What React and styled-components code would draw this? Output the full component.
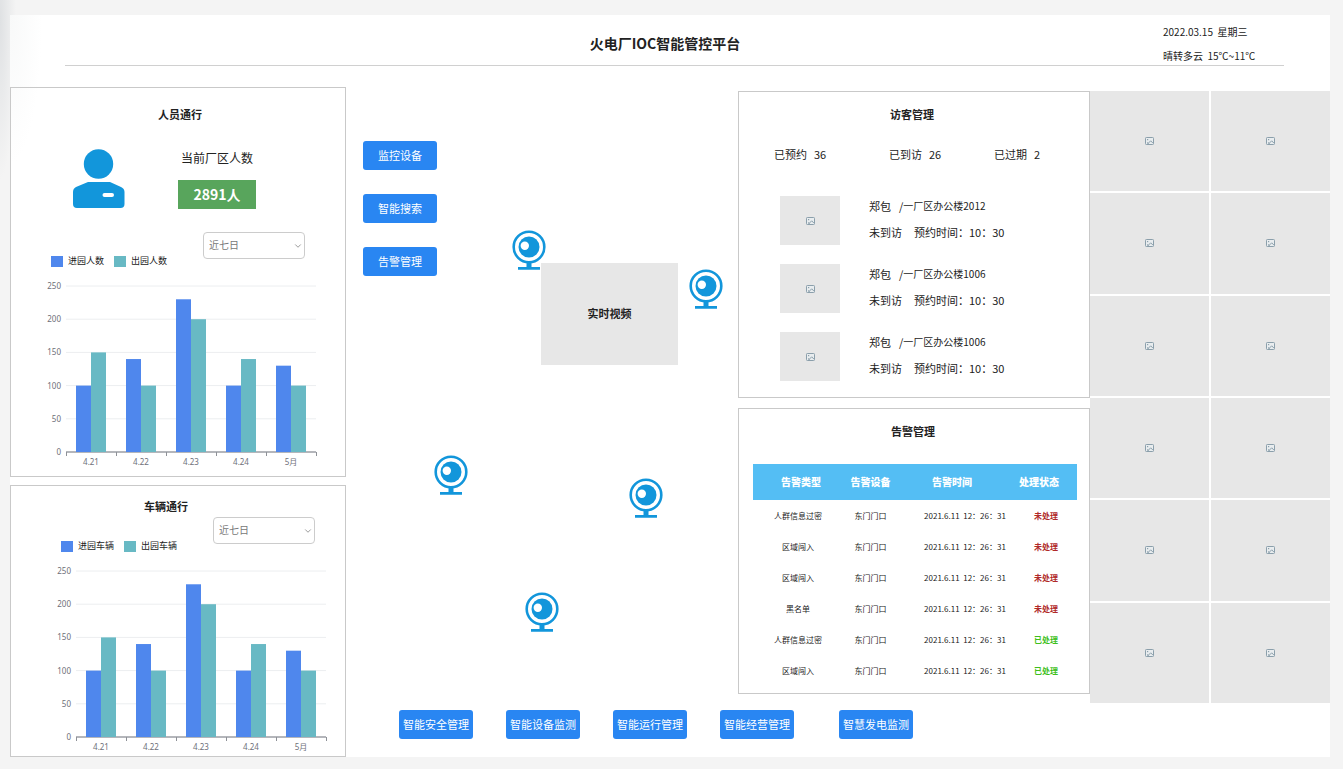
import React from "react";
import styled, { createGlobalStyle, ThemeProvider } from "styled-components";
import { ChevronDown } from "lucide-react";

const theme = {
  colors: {
    page: "#f4f4f4",
    board: "#ffffff",
    border: "#c9c9c9",
    placeholder: "#e7e7e7",
    text: "#222222",
    primary: "#2986f2",
    icon: "#1296db",
    success: "#58a55c",
    tableHeader: "#54bef4",
    seriesIn: "#4f87ed",
    seriesOut: "#68b9c4",
    pending: "#b02a2a",
    handled: "#3fbf1c",
  },
};

const chartData = [
  { label: "4.21", in: 100, out: 150 },
  { label: "4.22", in: 140, out: 100 },
  { label: "4.23", in: 230, out: 200 },
  { label: "4.24", in: 100, out: 140 },
  { label: "5月", in: 130, out: 100 },
];

const sideActions = ["监控设备", "智能搜索", "告警管理"];

const bottomGroups = [
  ["智能安全管理", "智能设备监测", "智能运行管理", "智能经营管理"],
  ["智慧发电监测"],
];

const cameras = [
  { id: 1, x: 166, y: 139 },
  { id: 2, x: 343, y: 178 },
  { id: 3, x: 88, y: 364 },
  { id: 4, x: 283, y: 387 },
  { id: 5, x: 179, y: 501 },
];

const visitorStats = [
  { label: "已预约", value: 36 },
  { label: "已到访", value: 26 },
  { label: "已过期", value: 2 },
];

const visitors = [
  { id: 1, name: "郑包", place: "一厂区办公楼2012" },
  { id: 2, name: "郑包", place: "一厂区办公楼1006" },
  { id: 3, name: "郑包", place: "一厂区办公楼1006" },
];

const alarms = [
  { id: 1, type: "人群信息过密", handled: false },
  { id: 2, type: "区域闯入", handled: false },
  { id: 3, type: "区域闯入", handled: false },
  { id: 4, type: "黑名单", handled: false },
  { id: 5, type: "人群信息过密", handled: true },
  { id: 6, type: "区域闯入", handled: true },
];

const UserIcon = () => (
  <svg width="52" height="60" viewBox="0 0 52 60" fill={theme.colors.icon}>
    <circle cx="25.500" cy="15" r="14.700" />
    <path
      fillRule="evenodd"
      d="M15 33h22l11 5q3.500 1.500 3.500 5v12q0 4-4 4H4q-4 0-4-4V43q0-3.500 3-5zM31.500 44a2 2 0 0 0 0 4h7.500a2 2 0 0 0 0-4z"
    />
  </svg>
);

const CameraIcon = () => (
  <svg width="34" height="40" viewBox="0 0 34 40" fill={theme.colors.icon}>
    <circle
      cx="17"
      cy="17"
      r="15.300"
      fill="#fff"
      stroke={theme.colors.icon}
      strokeWidth="2.600"
    />
    <circle cx="17" cy="17" r="10.500" />
    <circle cx="12.800" cy="15.700" r="4.200" fill="#fff" />
    <path d="M14.500 33h5v4H28v2.700H6V37h8.500z" />
  </svg>
);

const PictureIcon = () => (
  <svg width="9" height="8" viewBox="0 0 9 8" fill="none" stroke="#8b9fab">
    <rect x="0.500" y="0.500" width="8" height="7" rx="0.800" fill="#e9edef" />
    <rect x="2" y="2" width="1.200" height="1.200" fill="#8b9fab" stroke="none" />
    <path d="M2.500 7l3.200-3.200L8 6.200M2 5.500l1.500 1" />
  </svg>
);

const BarChart = ({ title, data }) => {
  const left = 25;
  const base = 175;
  const step = 50;
  const right = left + step * data.length;
  const toHeight = (value) => (value * 166) / 250;

  return (
    <Chart viewBox="0 0 280 192" role="img" aria-label={title}>
      {[0, 50, 100, 150, 200, 250].map((tick) => (
        <g key={tick}>
          <line
            x1={left}
            x2={right}
            y1={base - toHeight(tick)}
            y2={base - toHeight(tick)}
            stroke={tick ? "#eceef0" : "#b4b6bb"}
            strokeWidth={tick ? 1 : 2}
          />
          <text x="20" y={base - toHeight(tick) + 3} textAnchor="end">
            {tick}
          </text>
        </g>
      ))}
      {data.map((item, i) => (
        <g key={item.label}>
          <rect
            x={left + step * i + 10}
            y={base - toHeight(item.in)}
            width="15"
            height={toHeight(item.in)}
            fill={theme.colors.seriesIn}
          />
          <rect
            x={left + step * i + 25}
            y={base - toHeight(item.out)}
            width="15"
            height={toHeight(item.out)}
            fill={theme.colors.seriesOut}
          />
          <text x={left + step * i + 25} y="188" textAnchor="middle">
            {item.label}
          </text>
        </g>
      ))}
      {[0, 1, 2, 3, 4, 5].map((i) => (
        <path
          key={i}
          d={`M${left + step * i + 0.5} ${base}v4`}
          stroke="#8e9197"
        />
      ))}
    </Chart>
  );
};

const TrafficChart = ({ title, inLabel, outLabel, shifted }) => (
  <ChartBlock $shifted={shifted}>
    <ChartToolbar>
      <Legend>
        <LegendItem $color={theme.colors.seriesIn}>{inLabel}</LegendItem>
        <LegendItem $color={theme.colors.seriesOut}>{outLabel}</LegendItem>
      </Legend>
      <SelectBox>
        <Select aria-label={`${title}时间范围`} defaultValue="7">
          <option value="7">近七日</option>
          <option value="30">近三十日</option>
        </Select>
        <ChevronDown size={10} strokeWidth={2} />
      </SelectBox>
    </ChartToolbar>
    <BarChart title={title} data={chartData} />
  </ChartBlock>
);

const App = () => {
  return (
    <ThemeProvider theme={theme}>
      <GlobalStyle />
      <Board>
        <Header>
          <Title>火电厂IOC智能管控平台</Title>
          <HeaderInfo>
            <span>2022.03.15&nbsp; 星期三</span>
            <span>晴转多云&nbsp; 15℃~11℃</span>
          </HeaderInfo>
        </Header>

        <Content>
          <Sidebar>
            <PeoplePanel>
              <PanelTitle>人员通行</PanelTitle>
              <Summary>
                <UserIcon />
                <SummaryText>
                  <SummaryLabel>当前厂区人数</SummaryLabel>
                  <SummaryValue>2891人</SummaryValue>
                </SummaryText>
              </Summary>
              <TrafficChart
                title="人员通行"
                inLabel="进园人数"
                outLabel="出园人数"
              />
            </PeoplePanel>

            <VehiclePanel>
              <PanelTitle>车辆通行</PanelTitle>
              <TrafficChart
                title="车辆通行"
                inLabel="进园车辆"
                outLabel="出园车辆"
                shifted
              />
            </VehiclePanel>
          </Sidebar>

          <Main>
            <MainRow>
              <MapArea>
                <SideActions>
                  {sideActions.map((name) => (
                    <Button key={name}>{name}</Button>
                  ))}
                </SideActions>
                {cameras.map((camera) => (
                  <CameraPin
                    key={camera.id}
                    $x={camera.x}
                    $y={camera.y}
                    aria-label={`摄像头${camera.id}`}
                  >
                    <CameraIcon />
                  </CameraPin>
                ))}
                <VideoWindow>实时视频</VideoWindow>
              </MapArea>

              <InfoColumn>
                <VisitorPanel>
                  <PanelTitle>访客管理</PanelTitle>
                  <VisitorStats>
                    {visitorStats.map((stat) => (
                      <VisitorStat key={stat.label}>
                        <span>{stat.label}</span>
                        <span>{stat.value}</span>
                      </VisitorStat>
                    ))}
                  </VisitorStats>
                  <VisitorList>
                    {visitors.map((visitor) => (
                      <Visitor key={visitor.id}>
                        <Thumb>
                          <PictureIcon />
                        </Thumb>
                        <div>
                          <VisitorLine>
                            <VisitorName>{visitor.name}</VisitorName>
                            <span>/</span>
                            <Place>{visitor.place}</Place>
                          </VisitorLine>
                          <VisitorLine>
                            <VisitorStatus>未到访</VisitorStatus>
                            <span>预约时间：10：30</span>
                          </VisitorLine>
                        </div>
                      </Visitor>
                    ))}
                  </VisitorList>
                </VisitorPanel>

                <AlarmPanel>
                  <PanelTitle>告警管理</PanelTitle>
                  <AlarmTable>
                    <colgroup>
                      <col width="90" />
                      <col width="60" />
                      <col width="112" />
                      <col width="62" />
                    </colgroup>
                    <thead>
                      <tr>
                        <th>告警类型</th>
                        <th>告警设备</th>
                        <th>告警时间</th>
                        <th>处理状态</th>
                      </tr>
                    </thead>
                    <tbody>
                      {alarms.map((alarm) => (
                        <tr key={alarm.id}>
                          <td>{alarm.type}</td>
                          <td>东门门口</td>
                          <td>2021.6.11&nbsp; 12：26：31</td>
                          <Status $handled={alarm.handled}>
                            {alarm.handled ? "已处理" : "未处理"}
                          </Status>
                        </tr>
                      ))}
                    </tbody>
                  </AlarmTable>
                </AlarmPanel>
              </InfoColumn>

              <PhotoWall>
                {Array.from({ length: 12 }, (_, i) => (
                  <Photo key={i}>
                    <PictureIcon />
                  </Photo>
                ))}
              </PhotoWall>
            </MainRow>

            <BottomNav>
              {bottomGroups.map((group) => (
                <NavGroup key={group[0]}>
                  {group.map((name) => (
                    <Button key={name}>{name}</Button>
                  ))}
                </NavGroup>
              ))}
            </BottomNav>
          </Main>
        </Content>
      </Board>
    </ThemeProvider>
  );
};

const GlobalStyle = createGlobalStyle`
  * {
    box-sizing: border-box;
  }

  body {
    margin: 0;
    padding: 15px 13px 12px 10px;
    color: ${theme.colors.text};
    font-family: "Noto Sans CJK SC", "Noto Sans", sans-serif;
    font-size: 11px;
    line-height: 16px;
    background: radial-gradient(ellipse 16px 160px at 0 20px, #dfe1e3, ${theme.colors.page}) no-repeat;
    background-color: ${theme.colors.page};
  }
`;

const Board = styled.div`
  background: radial-gradient(
      ellipse 32px 150px at 0 0,
      #f8f9f9,
      ${({ theme }) => theme.colors.board}
    )
    no-repeat;
  background-color: ${({ theme }) => theme.colors.board};
`;

const Header = styled.header`
  display: flex;
  align-items: flex-start;
  height: 51px;
  margin: 0 46px 21px 55px;
  padding-left: 102px;
  border-bottom: 1px solid #d0d0d0;
`;

const Title = styled.h1`
  flex: 1;
  margin: 0;
  padding-top: 16px;
  font-size: 14px;
  line-height: 24px;
  text-align: center;
`;

const HeaderInfo = styled.div`
  display: flex;
  flex-direction: column;
  width: 121px;
  padding-top: 5px;
  font-size: 10px;
  line-height: 24px;
`;

const Content = styled.div`
  display: flex;
`;

const Sidebar = styled.aside`
  display: flex;
  flex-direction: column;
  gap: 8px;
  width: 336px;
`;

const Panel = styled.section`
  border: 1px solid ${({ theme }) => theme.colors.border};
`;

const PanelTitle = styled.h2`
  margin: 0;
  font-size: 11px;
  line-height: 16px;
  text-align: center;
`;

const PeoplePanel = styled(Panel)`
  padding: 18px 0 7px;

  ${PanelTitle} {
    padding-left: 4px;
  }
`;

const VehiclePanel = styled(Panel)`
  flex: 1;
  padding-top: 12px;

  ${PanelTitle} {
    padding-right: 24px;
  }
`;

const Summary = styled.div`
  display: flex;
  gap: 53px;
  padding: 27px 0 0 62px;
`;

const SummaryText = styled.div`
  display: flex;
  flex-direction: column;
  align-items: center;
  gap: 14px;
`;

const SummaryLabel = styled.div`
  font-size: 12px;
  line-height: 17px;
`;

const SummaryValue = styled.div`
  width: 78px;
  color: #fff;
  font-size: 14px;
  font-weight: bold;
  line-height: 29px;
  text-align: center;
  background: ${({ theme }) => theme.colors.success};
`;

const ChartBlock = styled.div`
  padding: ${({ $shifted }) => ($shifted ? "3px 14px 0 40px" : "23px 24px 0 30px")};
`;

const ChartToolbar = styled.div`
  display: flex;
  justify-content: space-between;
  height: 35px;
  margin-bottom: 10px;
  padding: 0 16px 0 10px;
`;

const Legend = styled.div`
  display: flex;
  align-items: flex-end;
  gap: 10px;
`;

const LegendItem = styled.div`
  display: flex;
  align-items: center;
  gap: 5px;
  font-size: 9px;
  line-height: 12px;

  &::before {
    content: "";
    width: 12px;
    height: 11px;
    background: ${({ $color }) => $color};
  }
`;

const SelectBox = styled.div`
  display: grid;
  align-items: center;
  width: 102px;
  height: 27px;

  > * {
    grid-area: 1 / 1;
  }

  svg {
    justify-self: end;
    margin-right: 2px;
    color: #888;
    pointer-events: none;
  }
`;

const Select = styled.select`
  appearance: none;
  width: 100%;
  height: 100%;
  padding: 0 5px 2px;
  border: 1px solid #cccccc;
  border-radius: 4px;
  background: none;
  color: #777;
  font: inherit;
  font-size: 10px;
`;

const Chart = styled.svg`
  display: block;
  width: 100%;

  text {
    fill: #6e7079;
    font-family: "Noto Sans", "Noto Sans CJK SC", sans-serif;
    font-size: 8px;
  }
`;

const Main = styled.main`
  flex: 1;
  padding-top: 4px;
`;

const MainRow = styled.div`
  display: flex;
  min-height: 612px;
`;

const MapArea = styled.div`
  position: relative;
  flex: 1;
  padding: 50px 0 0 17px;
`;

const SideActions = styled.div`
  display: flex;
  flex-direction: column;
  align-items: flex-start;
  gap: 24px;
`;

const Button = styled.button`
  width: 74px;
  height: 29px;
  padding: 0 0 2px;
  border: 0;
  border-radius: 3px;
  background: ${({ theme }) => theme.colors.primary};
  color: #fff;
  font: inherit;
  white-space: nowrap;
  cursor: pointer;
`;

const CameraPin = styled.button`
  position: absolute;
  left: ${({ $x }) => $x}px;
  top: ${({ $y }) => $y}px;
  padding: 0;
  border: 0;
  background: none;
  cursor: pointer;

  svg {
    display: block;
  }
`;

const VideoWindow = styled.div`
  position: absolute;
  left: 195px;
  top: 172px;
  width: 137px;
  height: 102px;
  background: ${({ theme }) => theme.colors.placeholder};
  font-weight: bold;
  line-height: 100px;
  text-align: center;
`;

const InfoColumn = styled.div`
  display: flex;
  flex-direction: column;
  gap: 10px;
  width: 352px;
  padding-bottom: 9px;

  ${PanelTitle} {
    padding-right: 4px;
  }
`;

const VisitorPanel = styled(Panel)`
  padding: 14px 0 16px;
`;

const VisitorStats = styled.div`
  display: grid;
  grid-template-columns: 115px 105px 1fr;
  padding: 24px 0 0 35px;
`;

const VisitorStat = styled.div`
  display: flex;
  gap: 7px;
`;

const VisitorList = styled.ul`
  display: flex;
  flex-direction: column;
  gap: 16px;
  margin: 0;
  padding: 31px 0 0 41px;
  list-style: none;
`;

const Visitor = styled.li`
  display: flex;
  align-items: flex-end;
  gap: 29px;
`;

const Thumb = styled.div`
  display: flex;
  align-items: center;
  justify-content: center;
  width: 60px;
  height: 49px;
  background: ${({ theme }) => theme.colors.placeholder};
`;

const VisitorLine = styled.div`
  display: flex;
  line-height: 26px;
`;

const VisitorName = styled.span`
  width: 30px;
`;

const VisitorStatus = styled.span`
  width: 45px;
`;

const Place = styled.span`
  font-size: 10px;
`;

const AlarmPanel = styled(Panel)`
  flex: 1;
  padding: 14px 12px 0 14px;
`;

const AlarmTable = styled.table`
  width: 100%;
  margin-top: 25px;
  border-collapse: collapse;
  table-layout: fixed;
  font-size: 8px;
  text-align: center;
  white-space: nowrap;

  th {
    height: 36px;
    padding: 0;
    background: ${({ theme }) => theme.colors.tableHeader};
    color: #fff;
    font-size: 10px;
    font-weight: 900;
  }

  th:first-child {
    padding-left: 6px;
  }

  th:nth-child(2),
  td:nth-child(2) {
    padding-right: 5px;
  }

  th:nth-child(3),
  th:nth-child(4) {
    padding-right: 14px;
  }

  td {
    height: 31px;
    padding: 0;
  }

  td:nth-child(3) {
    padding-left: 12px;
  }
`;

const Status = styled.td`
  color: ${({ theme, $handled }) =>
    $handled ? theme.colors.handled : theme.colors.pending};
  font-weight: bold;
`;

const PhotoWall = styled.div`
  display: grid;
  grid-template-columns: 1fr 1fr;
  grid-template-rows: repeat(6, 1fr);
  gap: 2px;
  width: 240px;
`;

const Photo = styled.div`
  display: flex;
  align-items: center;
  justify-content: center;
  background: ${({ theme }) => theme.colors.placeholder};
`;

const BottomNav = styled.nav`
  display: flex;
  gap: 45px;
  padding: 7px 0 18px 53px;
`;

const NavGroup = styled.div`
  display: flex;
  gap: 33px;
`;

export default App;
